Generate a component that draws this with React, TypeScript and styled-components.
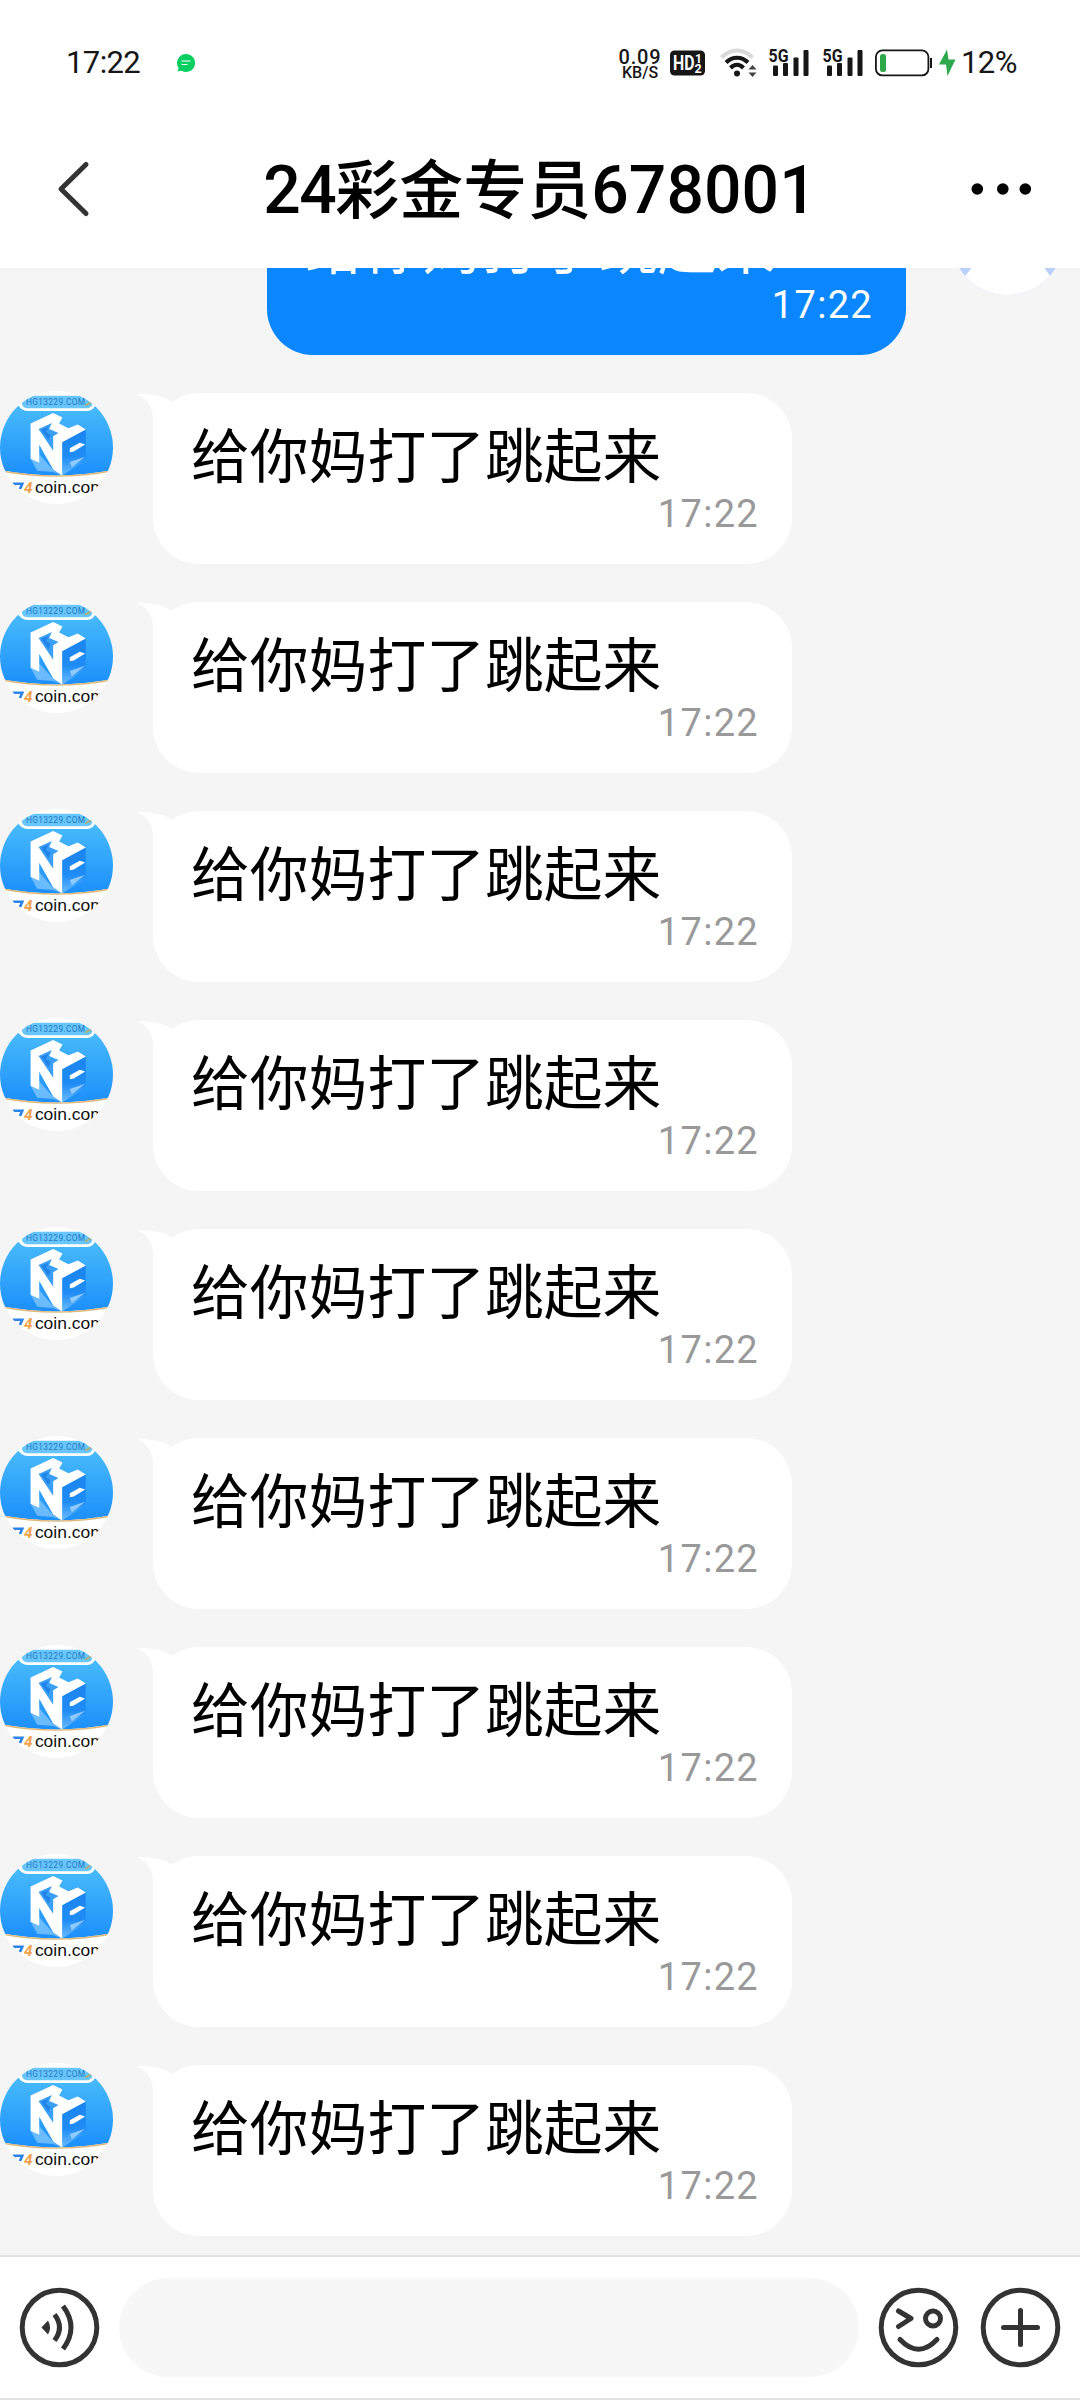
import React from "react";
import styled, { createGlobalStyle } from "styled-components";

const latin = `Roboto, "Noto Sans CJK SC", sans-serif`;
const cjk = `"Noto Sans CJK SC", sans-serif`;

const GlobalStyle = createGlobalStyle`
  * { box-sizing: border-box; }
  body { margin: 0; background: #fff; font-family: ${cjk}; color: #000; }
  svg { display: block; flex: none; overflow: visible; }
`;

const Screen = styled.div`
  width: 1080px;
  height: 2400px;
  display: flex;
  flex-direction: column;
  overflow: hidden;
  background: #fff;
`;

const StatusBar = styled.header`
  height: 110px;
  flex: none;
  display: flex;
  align-items: center;
  padding: 16px 63px 0 66px;
  font-family: ${latin};
  color: #161616;
`;

const Clock = styled.span<{ $width: number }>`
  width: ${(p) => p.$width}px;
  font-size: 31px;
  line-height: 36px;
  letter-spacing: -0.6px;
  white-space: nowrap;
`;

const StatusGap = styled.span<{ $w?: number }>`
  flex: ${(p) => (p.$w ? `0 0 ${p.$w}px` : "1")};
`;

const Speed = styled.div`
  width: 44px;
  display: flex;
  flex-direction: column;
  align-items: center;
  font-weight: 500;
`;

const SpeedValue = styled.span`
  font-size: 20px;
  line-height: 18px;
  letter-spacing: 0.8px;
`;

const SpeedUnit = styled.span`
  font-size: 16px;
  line-height: 13px;
`;

const TitleBar = styled.div`
  height: 158px;
  flex: none;
  display: flex;
  align-items: center;
  justify-content: space-between;
  padding: 0 46px 0 56px;
`;

const Title = styled.h1`
  margin: -3px 0 0 20px;
  display: flex;
  align-items: baseline;
  font-size: 64px;
  font-weight: 500;
  line-height: 90px;
  white-space: nowrap;
`;

const TitleDigits = styled.span<{ $spacing: number }>`
  font-family: ${latin};
  font-size: 66px;
  letter-spacing: ${(p) => p.$spacing}px;
`;

const Conversation = styled.main`
  height: 1987px;
  flex: none;
  display: flex;
  flex-direction: column;
  justify-content: flex-end;
  gap: 38px;
  padding-bottom: 19px;
  overflow: hidden;
  background: #f5f5f5;
`;

const MessageRow = styled.div<{ $sent?: boolean }>`
  height: 171px;
  flex: none;
  display: flex;
  flex-direction: ${(p) => (p.$sent ? "row-reverse" : "row")};
  align-items: flex-start;
  gap: ${(p) => (p.$sent ? 45 : 40)}px;
  padding-right: ${(p) => (p.$sent ? 16 : 0)}px;
`;

const AvatarBox = styled.div`
  width: 113px;
  height: 113px;
  flex: none;
  margin-top: -2px;
`;

const Bubble = styled.div<{ $sent?: boolean }>`
  position: relative;
  width: 639px;
  height: 171px;
  display: flex;
  flex-direction: column;
  padding: 18px 33px 0 38px;
  border-radius: 46px;
  background: ${(p) => (p.$sent ? "#0a87ff" : "#fff")};
  color: ${(p) => (p.$sent ? "#fff" : "#000")};
`;

const Tail = styled.svg`
  position: absolute;
  left: -14px;
  top: 0;
`;

const MessageText = styled.p`
  margin: 0;
  font-size: 58.8px;
  line-height: 84px;
  white-space: nowrap;
`;

const MessageTime = styled.time<{ $sent?: boolean }>`
  align-self: flex-end;
  font-family: ${latin};
  font-size: 38px;
  line-height: 38px;
  letter-spacing: 1.3px;
  color: ${(p) => (p.$sent ? "#fff" : "#999")};
`;

const InputBar = styled.footer`
  height: 145px;
  flex: none;
  display: flex;
  align-items: center;
  padding: 0 19px;
  border-top: 2px solid #e2e2e2;
  border-bottom: 2px solid #e2e2e2;
  background: #fff;
`;

const InputField = styled.div`
  width: 740px;
  height: 99px;
  margin: 0 19px;
  border-radius: 50px;
  background: #f7f7f7;
`;

const IconSpacer = styled.span`
  width: 21px;
`;

function ChatBadge() {
  return (
    <svg width="20" height="20" viewBox="0 0 20 20">
      <path d="M10 1a9 9 0 1 1-4.6 16.700L1.600 18.600 2.600 15A9 9 0 0 1 10 1z" fill="#08cf5f" />
      <path d="M5.500 8h9M5.500 11.500h6" stroke="#fff" strokeWidth="1" />
    </svg>
  );
}

function HdBadge() {
  return (
    <svg width="35" height="26" viewBox="0 0 35 26" fontFamily="Roboto, sans-serif" fontWeight="700" fill="#fff">
      <rect width="35" height="25" y="0.500" rx="4.500" fill="#161616" />
      <text x="3" y="19.800" fontSize="19.500" textLength="21.500" lengthAdjust="spacingAndGlyphs">HD</text>
      <text x="25" y="12.500" fontSize="12">1</text>
      <text x="24.500" y="22.800" fontSize="12.500">2</text>
    </svg>
  );
}

function WifiIcon() {
  return (
    <svg width="38" height="30" viewBox="0 0 38 30" fill="none">
      <path d="M1.500 9.500C10.500 0 23.500 0 32.500 9.500" stroke="#d9d9d9" strokeWidth="4" />
      <path d="M6 14.500C12.500 8 21.500 8 28 14.500" stroke="#161616" strokeWidth="4" />
      <path d="M10.500 20c4-4.200 9-4.200 13 0" stroke="#161616" strokeWidth="4" />
      <circle cx="17" cy="25.500" r="3" fill="#161616" />
      <path d="M28.500 21.500 32.500 17l4 4.500zM28.500 24.500l4 4.500 4-4.500z" fill="#444" />
    </svg>
  );
}

function SignalIcon() {
  return (
    <svg width="40" height="30" viewBox="0 0 40 30" fill="#161616">
      <text x="-0.500" y="13.500" fontFamily="Roboto, sans-serif" fontWeight="700" fontSize="18.500" textLength="20" lengthAdjust="spacingAndGlyphs">5G</text>
      <rect x="4" y="17.500" width="5" height="10.500" rx="1" />
      <rect x="14" y="15" width="5" height="13" rx="1" />
      <rect x="24.500" y="9.500" width="5" height="18.500" rx="1" />
      <rect x="34.500" y="2" width="5" height="26" rx="1" />
    </svg>
  );
}

function BatteryIcon() {
  return (
    <svg width="58" height="28" viewBox="0 0 58 28">
      <rect x="0.900" y="1.400" width="52.500" height="25" rx="6.500" fill="none" stroke="#161616" strokeWidth="1.800" />
      <rect x="5" y="5" width="6" height="18" rx="2.500" fill="#2fa84c" />
      <rect x="55" y="9" width="2" height="10" fill="#161616" />
    </svg>
  );
}

function BoltIcon() {
  return (
    <svg width="17" height="28" viewBox="0 0 17 28">
      <path d="M8 0.500 0 15.500h7L8.500 27 16.500 10.500H9.500z" fill="#2fa84c" />
    </svg>
  );
}

function BackIcon() {
  return (
    <svg width="34" height="58" viewBox="0 0 34 58" fill="none">
      <path d="M30 4.500 5 29l25 24.500" stroke="#333" strokeWidth="5" strokeLinecap="round" strokeLinejoin="round" />
    </svg>
  );
}

function MoreIcon() {
  return (
    <svg width="64" height="14" viewBox="0 0 64 14">
      <circle cx="7.300" cy="7" r="5.800" />
      <circle cx="32.800" cy="7" r="5.800" />
      <circle cx="55.300" cy="7" r="5.800" />
    </svg>
  );
}

function BrandAvatar({ id }: { id: string }) {
  return (
    <svg width="113" height="113" viewBox="0 32 340 340">
      <defs>
        <clipPath id={`c${id}`}><circle cx="170" cy="202" r="170" /></clipPath>
        <linearGradient id={`g${id}`} x1="0" y1="0" x2="0" y2="1">
          <stop offset="0" stopColor="#4abcfb" />
          <stop offset="1" stopColor="#1c8ffb" />
        </linearGradient>
        <linearGradient id={`f${id}`} x1="0" y1="0" x2="0" y2="1">
          <stop offset="0" stopColor="#1b84ef" />
          <stop offset="0.600" stopColor="#1f8cf5" />
          <stop offset="1" stopColor="#6cbcfd" />
        </linearGradient>
      </defs>
      <g clipPath={`url(#c${id})`}>
        <rect y="32" width="340" height="340" fill="#fff" />
        <path d="M0 68H50Q62 92 84 92H262Q282 92 290 68H340V270Q170 302 0 270z" fill={`url(#g${id})`} />
        <rect x="66" y="46" width="212" height="38" rx="15" fill="#69c6fb" />
        <path d="M0 272Q170 304 340 272" fill="none" stroke="#e0b878" strokeWidth="4" />
        <text x="78" y="74" fontFamily="Roboto, sans-serif" fontSize="25" fill="#2479c4" textLength="178">HG13229.COM</text>
        <path d="M256 76l18-10" stroke="#b9aa62" strokeWidth="5" />
        <path d="M92 236 118 222 160 270 187 286 160 276 112 272z" fill="#8accfd" opacity="0.700" />
        <path d="M187 184 258 148V240L187 286z" fill={`url(#f${id})`} />
        <path d="M92 130 160 98 188 112 178 130 206 144 234 133 258 148 187 186V286L160 268 118 194V248L92 236z" fill="#fff" />
        <path d="M116 146 156 128 148 146 176 158 160 168V212z" fill="#3a9ff6" />
        <path d="M124 148 146 140 138 156 152 164 146 180z" fill="#2083e8" />
        <path d="M210 204 240 188 256 193 222 214 210 216z" fill="#fff" />
        <path d="M210 246 256 230 216 262z" fill="#8dcafd" />
        <path d="M38 311H67L60 327" fill="none" stroke="#2c83e8" strokeWidth="8" />
        <text x="72" y="338" fontFamily="Roboto, sans-serif" fontWeight="700" fontStyle="italic" fontSize="46" fill="#f0a34c">4</text>
        <text x="105" y="338" fontFamily='"Liberation Sans", sans-serif' fontSize="49" fill="#111" textLength="210" lengthAdjust="spacingAndGlyphs">coin.com</text>
      </g>
    </svg>
  );
}

function OwnAvatar() {
  return (
    <svg width="113" height="113" viewBox="0 0 113 113">
      <defs><clipPath id="own"><circle cx="56.500" cy="56.500" r="56.500" /></clipPath></defs>
      <g clipPath="url(#own)">
        <rect width="113" height="113" fill="#b8d0fa" />
        <path d="M22 84Q56 40 92 84L102 98V113H11V98z" fill="#fff" />
      </g>
    </svg>
  );
}

function BubbleTail() {
  return (
    <Tail width="50" height="46" viewBox="0 0 50 46">
      <path d="M-2 1C14 1 24 3 31 8L50 14 30 46H14V26C14 14 9 6-2 1z" fill="#fff" />
    </Tail>
  );
}

function VoiceIcon() {
  return (
    <svg width="81" height="81" viewBox="0 0 81 81" fill="none" stroke="#333" strokeWidth="5">
      <circle cx="40.500" cy="40.500" r="37.300" />
      <path d="M22.500 40.500 29 33.500Q33 40.500 29 47.500z" fill="#333" stroke="none" />
      <path d="M35.500 27.500Q45.500 40.500 35.500 53.500M44 19Q60 40.500 44 62" />
    </svg>
  );
}

function EmojiIcon() {
  return (
    <svg width="81" height="81" viewBox="0 0 81 81" fill="none" stroke="#333" strokeWidth="5" strokeLinecap="round" strokeLinejoin="round">
      <circle cx="40.500" cy="40.500" r="37.300" />
      <path d="M20.500 24 33 31.500 20.500 39.500M22 52.500Q40.500 72 59 52.500" />
      <circle cx="55" cy="31.500" r="7.500" />
    </svg>
  );
}

function PlusIcon() {
  return (
    <svg width="81" height="81" viewBox="0 0 81 81" fill="none" stroke="#333" strokeWidth="5" strokeLinecap="round">
      <circle cx="40.500" cy="40.500" r="37.300" />
      <path d="M23.500 40.500h34M40.500 23.500v34" />
    </svg>
  );
}

type Message = { id: number; text: string; time: string; sent?: boolean };

const messages: Message[] = Array.from({ length: 10 }, (_, i) => ({
  id: i,
  text: "给你妈打了跳起来",
  time: "17:22",
  sent: i === 0,
}));

export default function App() {
  return (
    <Screen>
      <GlobalStyle />
      <StatusBar>
        <Clock $width={110}>17:22</Clock>
        <ChatBadge />
        <StatusGap />
        <Speed>
          <SpeedValue>0.09</SpeedValue>
          <SpeedUnit>KB/S</SpeedUnit>
        </Speed>
        <StatusGap $w={8} />
        <HdBadge />
        <StatusGap $w={15} />
        <WifiIcon />
        <StatusGap $w={10.5} />
        <SignalIcon />
        <StatusGap $w={14} />
        <SignalIcon />
        <StatusGap $w={12.5} />
        <BatteryIcon />
        <StatusGap $w={6} />
        <BoltIcon />
        <StatusGap $w={5} />
        <Clock $width={56}>12%</Clock>
      </StatusBar>
      <TitleBar>
        <BackIcon />
        <Title>
          <TitleDigits $spacing={-1.5}>24</TitleDigits>
          彩金专员
          <TitleDigits $spacing={0.1}>678001</TitleDigits>
        </Title>
        <MoreIcon />
      </TitleBar>
      <Conversation>
        {messages.map((m) => (
          <MessageRow key={m.id} $sent={m.sent}>
            <AvatarBox>{m.sent ? <OwnAvatar /> : <BrandAvatar id={String(m.id)} />}</AvatarBox>
            <Bubble $sent={m.sent}>
              {!m.sent && <BubbleTail />}
              <MessageText>{m.text}</MessageText>
              <MessageTime $sent={m.sent}>{m.time}</MessageTime>
            </Bubble>
          </MessageRow>
        ))}
      </Conversation>
      <InputBar>
        <VoiceIcon />
        <InputField />
        <EmojiIcon />
        <IconSpacer />
        <PlusIcon />
      </InputBar>
    </Screen>
  );
}
